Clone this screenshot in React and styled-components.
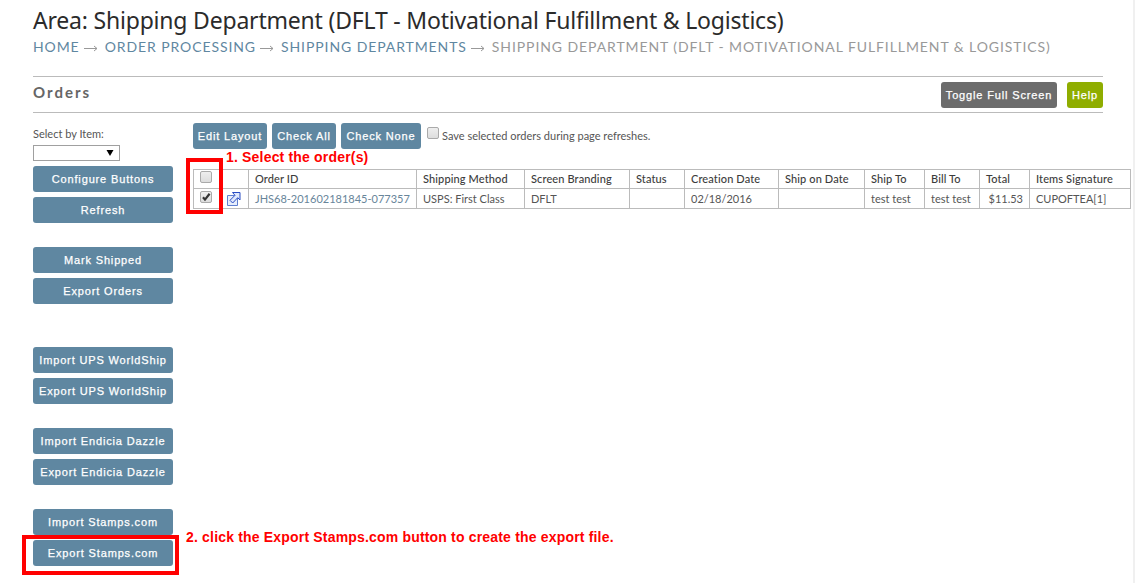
import * as React from 'react'
import styled, { createGlobalStyle } from 'styled-components'

const GlobalStyle = createGlobalStyle`
  * {
    box-sizing: border-box;
  }

  body {
    margin: 0;
    background-color: #fff;
    overflow: hidden;
  }
`

const Page = styled.div`
  width: 1135px;
  height: 583px;
  padding: 0 0 0 33px;
  border-right: 2px solid #f0f0f0;
  font-family: Lato, 'Liberation Sans', sans-serif;
  font-size: 11px;
  color: #555;
  white-space: nowrap;
`

const Title = styled.h1`
  height: 38px;
  margin: 0;
  padding-top: 5px;
  font-family: 'Noto Sans', sans-serif;
  font-size: 23px;
  font-weight: 400;
  line-height: 30px;
  letter-spacing: -0.2px;
  color: #2b2b2b;
`

const Breadcrumbs = styled.nav`
  display: flex;
  height: 38px;
  font-size: 14px;
  line-height: 18px;
  letter-spacing: 0.91px;
  color: #999;
`

const Crumb = styled.a`
  color: #5f87a1;
`

const Arrow = styled.svg`
  width: 14px;
  height: 18px;
  margin: 0 7px 0 4px;
  stroke: #999;
  fill: none;
`

const SectionBar = styled.header`
  display: flex;
  align-items: center;
  gap: 10px;
  width: 1070px;
  height: 37px;
  border-top: 1px solid #bbb;
  border-bottom: 1px solid #bbb;
`

const SectionTitle = styled.h2`
  flex: 1;
  margin: 0;
  padding-bottom: 6px;
  font-size: 15px;
  letter-spacing: 2px;
  color: #666;
`

const Button = styled.button`
  display: block;
  width: ${(props) => props.$width || 140}px;
  height: 26px;
  padding: 0;
  border: none;
  border-radius: 3px;
  background-color: ${(props) => props.$color || '#5f87a1'};
  color: #fff;
  font-family: 'Liberation Sans', Arial, sans-serif;
  font-size: 11px;
  font-weight: 400;
  letter-spacing: 0.85px;
  -webkit-text-stroke: 0.25px #fff;
  text-align: center;
  white-space: nowrap;
  cursor: pointer;
`

const Columns = styled.div`
  display: flex;
`

const Sidebar = styled.aside`
  width: 160px;
  padding-top: 13px;
`

const FilterLabel = styled.label`
  display: block;
  height: 19px;
  line-height: 16px;
`

const FilterSelect = styled.div`
  display: flex;
  align-items: center;
  justify-content: flex-end;
  width: 87px;
  height: 16px;
  margin-bottom: 5px;
  padding-right: 5px;
  border: 1px solid #a0a0a0;
`

const ButtonGroup = styled.div`
  display: flex;
  flex-direction: column;
  gap: 5px;
  margin-bottom: ${(props) => props.$after || 24}px;
`

const Main = styled.main`
  padding-top: 10px;
`

const Toolbar = styled.div`
  display: flex;
  gap: 5px;
  height: 46px;
`

const SaveOption = styled.label`
  display: flex;
  gap: 2px;
  padding: 4px 0 0 1px;
`

const SaveText = styled.span`
  padding-top: 1px;
  line-height: 16px;
`

const CheckMark = styled.svg`
  display: block;
  width: 13px;
  height: 13px;
`

const Table = styled.table`
  width: 938px;
  table-layout: fixed;
  border-collapse: separate;
  border-spacing: 0;
  border-top: 1px solid #bbb;
  border-left: 1px solid #bbb;
`

const Cell = styled.td`
  height: ${(props) => (props.$head ? 19 : 20)}px;
  padding: 0 6px;
  border-right: 1px solid #bbb;
  border-bottom: 1px solid #bbb;
  font-size: 11px;
  font-weight: ${(props) => (props.$head ? 500 : 400)};
  line-height: 16px;
  letter-spacing: ${(props) => (props.$head ? 0.12 : 0)}px;
  text-align: ${(props) => props.$align || 'left'};
  color: ${(props) => (props.$link ? '#68859a' : props.$head ? '#3c3c3c' : '#555')};
`

const CheckCell = styled(Cell)`
  padding-bottom: ${(props) => (props.$head ? 4 : 3)}px;
`

const IconCell = styled(Cell)`
  padding: 0 0 0 7px;
`

const Highlight = styled.div`
  position: absolute;
  left: ${(props) => props.$x}px;
  top: ${(props) => props.$y}px;
  width: ${(props) => props.$w}px;
  height: ${(props) => props.$h}px;
  border: 4px solid #f00;
  pointer-events: none;
`

const Note = styled.div`
  position: absolute;
  left: ${(props) => props.$x}px;
  top: ${(props) => props.$y}px;
  color: #f00;
  font-family: 'Liberation Sans', Arial, sans-serif;
  font-size: 14px;
  font-weight: 700;
  line-height: 16px;
  letter-spacing: 0.18px;
  white-space: nowrap;
`

const buttonGroups = [
  { labels: ['Configure Buttons', 'Refresh'] },
  { labels: ['Mark Shipped', 'Export Orders'], after: 43 },
  { labels: ['Import UPS WorldShip', 'Export UPS WorldShip'] },
  { labels: ['Import Endicia Dazzle', 'Export Endicia Dazzle'] },
  { labels: ['Import Stamps.com', 'Export Stamps.com'] },
]

const columns = [
  { title: 'Order ID', width: 168, value: 'JHS68-201602181845-077357', link: true },
  { title: 'Shipping Method', width: 108, value: 'USPS: First Class' },
  { title: 'Screen Branding', width: 105, value: 'DFLT' },
  { title: 'Status', width: 55, value: '' },
  { title: 'Creation Date', width: 94, value: '02/18/2016' },
  { title: 'Ship on Date', width: 86, value: '' },
  { title: 'Ship To', width: 60, value: 'test test' },
  { title: 'Bill To', width: 55, value: 'test test' },
  { title: 'Total', width: 50, value: '$11.53', align: 'right' },
  { title: 'Items Signature', width: 101, value: 'CUPOFTEA[1]' },
]

const crumbs = ['HOME', 'ORDER PROCESSING', 'SHIPPING DEPARTMENTS']

const Checkbox = ({ checked }) => (
  <CheckMark viewBox="0 0 13 13">
    <defs>
      <linearGradient id="boxFill" x1="0" y1="0" x2="0" y2="1">
        <stop offset="0" stopColor="#efefef" />
        <stop offset="1" stopColor="#dcdcdc" />
      </linearGradient>
    </defs>
    <rect x="0.5" y="0.5" width="11" height="11" rx="1.5" fill="url(#boxFill)" stroke="#aaa" />
    {checked && (
      <path d="M3 6.2 L5 8.6 L9.6 2.8" fill="none" stroke="#333" strokeWidth="2.2" />
    )}
  </CheckMark>
)

const OpenIconSvg = styled.svg`
  display: block;
  width: 14px;
  height: 14px;
`

const OpenIcon = () => (
  <OpenIconSvg viewBox="0 0 14 14">
    <path d="M0.5 3.5h10v10h-10z" fill="#e6edfb" stroke="#5f7fd0" />
    <path
      d="M5.5 0.5h7.5v7.5l-2.3-2.3-5 5.3-2.7-2.7 5-5z"
      fill="#dfe8fc"
      stroke="#2a4cc4"
    />
  </OpenIconSvg>
)

const OrdersTable = () => (
  <Table>
    <colgroup>
      <col width="26" />
      <col width="29" />
      {columns.map((column) => (
        <col key={column.title} width={column.width} />
      ))}
    </colgroup>
    <tbody>
      <tr>
        <CheckCell $head>
          <Checkbox />
        </CheckCell>
        <IconCell $head />
        {columns.map((column) => (
          <Cell key={column.title} $head>
            {column.title}
          </Cell>
        ))}
      </tr>
      <tr>
        <CheckCell>
          <Checkbox checked />
        </CheckCell>
        <IconCell>
          <OpenIcon />
        </IconCell>
        {columns.map((column) => (
          <Cell key={column.title} $link={column.link} $align={column.align}>
            {column.value}
          </Cell>
        ))}
      </tr>
    </tbody>
  </Table>
)

const App = () => {
  return (
    <Page>
      <GlobalStyle />
      <Title>Area: Shipping Department (DFLT - Motivational Fulfillment &amp; Logistics)</Title>
      <Breadcrumbs>
        {crumbs.map((crumb) => (
          <React.Fragment key={crumb}>
            <Crumb>{crumb}</Crumb>
            <Arrow viewBox="0 0 14 18">
              <path d="M0 10.5h13M10 8l3 2.5-3 2.5" />
            </Arrow>
          </React.Fragment>
        ))}
        <span>SHIPPING DEPARTMENT (DFLT - MOTIVATIONAL FULFILLMENT &amp; LOGISTICS)</span>
      </Breadcrumbs>
      <SectionBar>
        <SectionTitle>Orders</SectionTitle>
        <Button $width={116} $color="#6c6c6c">
          Toggle Full Screen
        </Button>
        <Button $width={36} $color="#8fad00">
          Help
        </Button>
      </SectionBar>
      <Columns>
        <Sidebar>
          <FilterLabel>Select by Item:</FilterLabel>
          <FilterSelect>
            <svg width="8" height="6" viewBox="0 0 8 6">
              <path d="M0.5 0h7L4 6z" fill="#000" />
            </svg>
          </FilterSelect>
          {buttonGroups.map((group) => (
            <ButtonGroup key={group.labels[0]} $after={group.after}>
              {group.labels.map((label) => (
                <Button key={label}>{label}</Button>
              ))}
            </ButtonGroup>
          ))}
        </Sidebar>
        <Main>
          <Toolbar>
            <Button $width={74}>Edit Layout</Button>
            <Button $width={64}>Check All</Button>
            <Button $width={80}>Check None</Button>
            <SaveOption>
              <Checkbox />
              <SaveText>Save selected orders during page refreshes.</SaveText>
            </SaveOption>
          </Toolbar>
          <OrdersTable />
        </Main>
      </Columns>
      <Highlight $x={186} $y={158} $w={37} $h={56} />
      <Note $x={226} $y={149}>
        1. Select the order(s)
      </Note>
      <Highlight $x={22} $y={535} $w={157} $h={40} />
      <Note $x={186} $y={529}>
        2. click the Export Stamps.com button to create the export file.
      </Note>
    </Page>
  )
}

export default App
